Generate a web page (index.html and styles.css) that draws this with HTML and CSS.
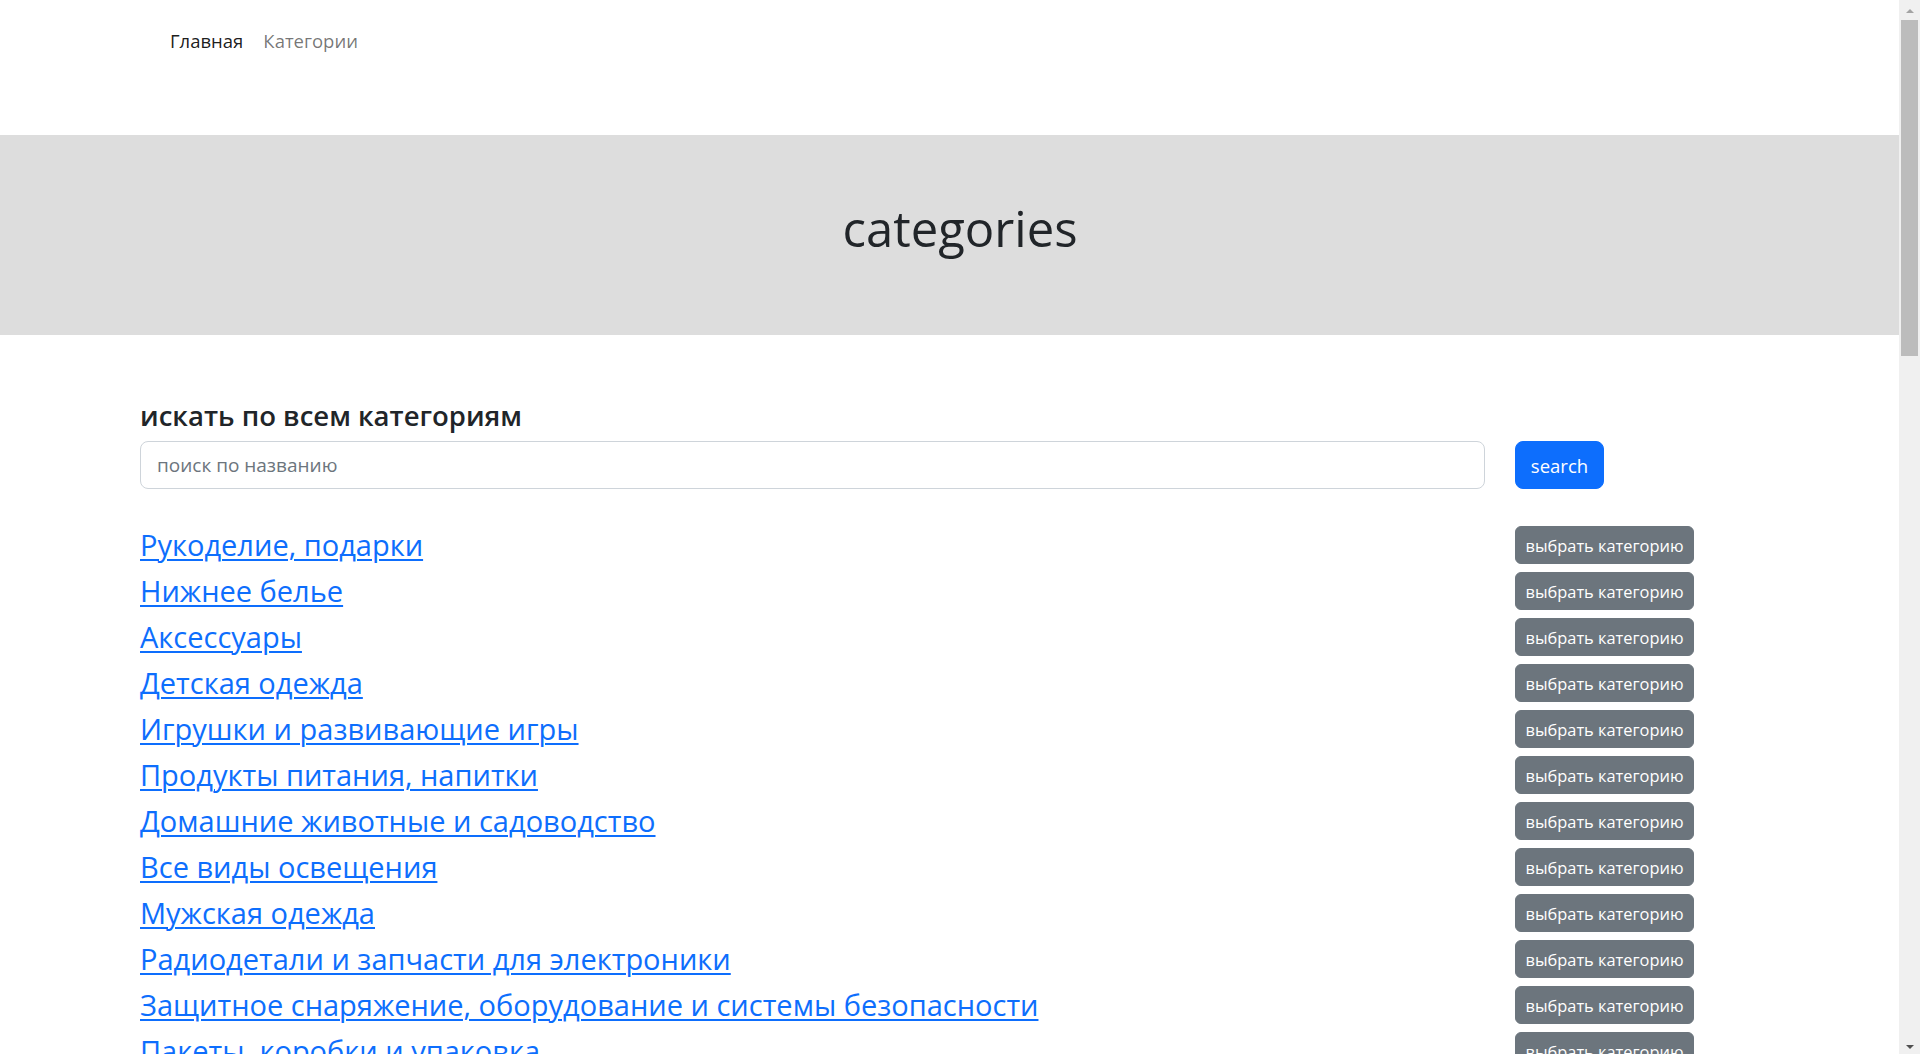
FILE: index.html
```html
<!DOCTYPE html>
<html lang="ru">
<head>
<meta charset="utf-8">
<title>categories</title>
<link rel="stylesheet" href="styles.css">
</head>
<body>
<nav class="topnav">
  <a class="nav-link active" href="#">Главная</a>
  <a class="nav-link" href="#">Категории</a>
</nav>
<header class="hero">
  <h1 class="hero-title">categories</h1>
</header>
<main class="main">
  <h4 class="search-title">искать по всем категориям</h4>
  <form class="grid search-row">
    <input class="search-input" type="text" placeholder="поиск по названию">
    <div><button class="btn btn-primary" type="button">search</button></div>
  </form>
  <ul class="cat-list">
    <li class="grid cat-row"><a href="#" class="cat-link">Рукоделие, подарки</a><div><button class="btn btn-secondary" type="button">выбрать категорию</button></div></li>
    <li class="grid cat-row"><a href="#" class="cat-link">Нижнее белье</a><div><button class="btn btn-secondary" type="button">выбрать категорию</button></div></li>
    <li class="grid cat-row"><a href="#" class="cat-link">Аксессуары</a><div><button class="btn btn-secondary" type="button">выбрать категорию</button></div></li>
    <li class="grid cat-row"><a href="#" class="cat-link">Детская одежда</a><div><button class="btn btn-secondary" type="button">выбрать категорию</button></div></li>
    <li class="grid cat-row"><a href="#" class="cat-link">Игрушки и развивающие игры</a><div><button class="btn btn-secondary" type="button">выбрать категорию</button></div></li>
    <li class="grid cat-row"><a href="#" class="cat-link">Продукты питания, напитки</a><div><button class="btn btn-secondary" type="button">выбрать категорию</button></div></li>
    <li class="grid cat-row"><a href="#" class="cat-link">Домашние животные и садоводство</a><div><button class="btn btn-secondary" type="button">выбрать категорию</button></div></li>
    <li class="grid cat-row"><a href="#" class="cat-link">Все виды освещения</a><div><button class="btn btn-secondary" type="button">выбрать категорию</button></div></li>
    <li class="grid cat-row"><a href="#" class="cat-link">Мужская одежда</a><div><button class="btn btn-secondary" type="button">выбрать категорию</button></div></li>
    <li class="grid cat-row"><a href="#" class="cat-link">Радиодетали и запчасти для электроники</a><div><button class="btn btn-secondary" type="button">выбрать категорию</button></div></li>
    <li class="grid cat-row"><a href="#" class="cat-link">Защитное снаряжение, оборудование и системы безопасности</a><div><button class="btn btn-secondary" type="button">выбрать категорию</button></div></li>
    <li class="grid cat-row"><a href="#" class="cat-link">Пакеты, коробки и упаковка</a><div><button class="btn btn-secondary" type="button">выбрать категорию</button></div></li>
  </ul>
</main>
<div class="scrollbar" aria-hidden="true">
  <span class="sb-arrow sb-up"></span>
  <span class="sb-thumb"></span>
  <span class="sb-arrow sb-down"></span>
</div>
</body>
</html>
```

FILE: styles.css
```css
* { box-sizing: border-box; }
html, body { margin: 0; padding: 0; }
body {
  font-family: "Open Sans", "Noto Sans", "Liberation Sans", sans-serif;
  font-size: 16px;
  line-height: 1.5;
  color: #212529;
  background: #fff;
}
.topnav {
  display: flex;
  gap: 20px;
  padding: 27px 0 0 170px;
  height: 135px;
}
.nav-link {
  color: rgba(0,0,0,0.55);
  text-decoration: none;
  font-size: 18.5px;
  line-height: 28px;
}
.nav-link.active { color: rgba(0,0,0,0.9); }
.hero {
  background: #dddddd;
  height: 200px;
  display: flex;
  align-items: center;
  justify-content: center;
}
.hero-title {
  margin: 0 0 14px;
  font-size: 49px;
  font-weight: 400;
  line-height: 1.2;
}
.main { padding: 0 161px 40px 140px; }
.search-title {
  margin: 64px 0 8px;
  font-size: 27.5px;
  font-weight: 600;
  line-height: 34px;
}
.grid {
  display: grid;
  grid-template-columns: 1345px 244px;
  column-gap: 30px;
  align-items: center;
}
.search-row { margin: 0 0 37px; }
.search-input {
  height: 48px;
  padding: 8px 16px;
  font: inherit;
  font-size: 19px;
  color: #212529;
  border: 1px solid #ced4da;
  border-radius: 8px;
  outline: none;
}
.search-input::placeholder { color: #6c757d; }
.btn {
  font-family: inherit;
  border: 1px solid transparent;
  color: #fff;
  cursor: pointer;
}
.btn-primary {
  background: #0d6efd;
  border-color: #0d6efd;
  height: 48px;
  width: 89px;
  padding: 0;
  font-size: 18.5px;
  border-radius: 8px;
}
.btn-secondary {
  background: #6c757d;
  border-color: #6c757d;
  height: 38px;
  width: 179px;
  padding: 0;
  font-size: 16.4px;
  border-radius: 6px;
}
.cat-list { list-style: none; margin: 0; padding: 0; }
.cat-row { height: 46px; align-items: start; }
.cat-link {
  color: #0d6efd;
  font-size: 29px;
  line-height: 38px;
  text-decoration: underline;
  text-decoration-thickness: 2px;
  text-underline-offset: 3px;
}

/* visual replica of the browser's vertical scrollbar, drawn over the page edge */
.scrollbar {
  position: fixed;
  top: 0;
  right: 0;
  width: 21px;
  height: 100vh;
  background: #f0f0f0;
  display: flex;
  flex-direction: column;
  align-items: center;
}
.sb-arrow {
  display: block;
  width: 0;
  height: 0;
  border-left: 4.5px solid transparent;
  border-right: 4.5px solid transparent;
}
.sb-up {
  margin-top: 9px;
  border-bottom: 4px solid #a3a3a3;
}
.sb-thumb {
  display: block;
  width: 17px;
  height: 336px;
  margin-top: 7px;
  background: #bcbcbc;
}
.sb-down {
  margin-top: auto;
  margin-bottom: 5px;
  border-top: 4px solid #505050;
}
```
